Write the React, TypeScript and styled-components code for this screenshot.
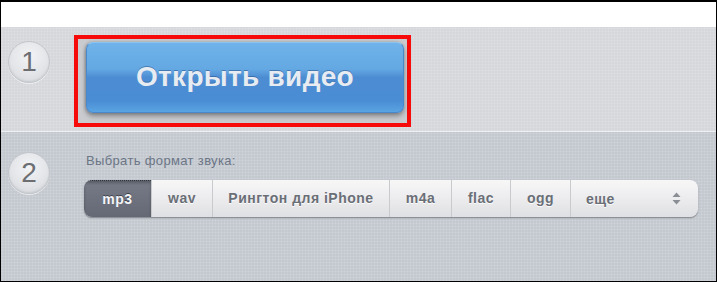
import React from 'react';
import styled, { createGlobalStyle } from 'styled-components';

const GlobalStyle = createGlobalStyle`
  html, body {
    margin: 0;
    padding: 0;
    background: #fff;
  }
  * {
    box-sizing: border-box;
  }
`;

const Frame = styled.div`
  width: 717px;
  height: 282px;
  border: 1px solid #000;
  border-top-width: 2px;
  background: #fff;
  display: flex;
  flex-direction: column;
  overflow: hidden;
  font-family: 'Liberation Sans', Arial, sans-serif;
`;

const TopStrip = styled.div`
  height: 25px;
  flex: none;
  background: #fff;
`;

const Step = styled.section<{ $tone: 'light' | 'dark' }>`
  display: flex;
  align-items: flex-start;
  padding-left: 7px;
  background-color: ${({ $tone }) => ($tone === 'light' ? '#d5d7db' : '#c4c8cf')};
  background-image: radial-gradient(rgba(255, 255, 255, 0.22) 0.8px, transparent 1.1px);
  background-size: 3px 3px;

  &.first {
    height: 104px;
    flex: none;
  }
  &.second {
    flex: 1;
    border-top: 1px solid #eef0f3;
  }
`;

const StepNumber = styled.div<{ $top: number }>`
  flex: none;
  width: 42px;
  height: 42px;
  margin-top: ${({ $top }) => $top}px;
  border-radius: 50%;
  border: 1px solid #c3c6cb;
  background: radial-gradient(circle at 50% 35%, #f2f3f5 0%, #e3e5e8 55%, #d3d6db 100%);
  box-shadow: inset 0 -1px 2px rgba(0, 0, 0, 0.08), 0 1px 0 rgba(255, 255, 255, 0.6);
  display: flex;
  align-items: center;
  justify-content: center;
  color: #6c6e72;
  font-size: 28px;
  line-height: 1;
  padding-bottom: 1px;
`;

const HighlightBox = styled.div`
  margin: 8px 0 0 24px;
  width: 337px;
  height: 92px;
  border: 4px solid #f70a0a;
  padding: 3px 3px 10px 8px;
  background: #c9cbcf;
  display: flex;
`;

const OpenButton = styled.button.attrs({ type: 'button' })`
  flex: 1;
  border: 1px solid #4a88cc;
  border-top-color: #8cc4ef;
  border-radius: 7px;
  background: linear-gradient(
    #70b3ea 0%,
    #64a8e3 38%,
    #4c8cd2 50%,
    #4a8dd5 84%,
    #5aa4e2 100%
  );
  box-shadow: 0 3px 5px rgba(0, 0, 0, 0.35), -1px 0 3px rgba(0, 0, 0, 0.2);
  color: #e7ecf2;
  font-family: 'Liberation Sans', Arial, sans-serif;
  font-weight: bold;
  font-size: 28px;
  letter-spacing: 0.3px;
  text-shadow: 0 -1px 0 rgba(30, 70, 120, 0.45);
  cursor: pointer;
  padding: 0 0 2px;
`;

const FormatArea = styled.div`
  margin: 22px 0 0 34px;
  display: flex;
  flex-direction: column;
`;

const Label = styled.div`
  margin-left: 2px;
  font-size: 13px;
  line-height: 14px;
  letter-spacing: 0.35px;
  color: #6b7686;
`;

const Segments = styled.div`
  margin-top: 12px;
  width: 614px;
  height: 37px;
  display: flex;
  border-radius: 8px;
  background: linear-gradient(#f7f7f8 0%, #ececee 50%, #dfe0e3 100%);
  box-shadow: 0 1px 0 #8e9298, 0 1px 2px rgba(0, 0, 0, 0.25);
  overflow: hidden;
`;

const Segment = styled.div<{ $w: number; $active?: boolean; $left?: boolean }>`
  flex: none;
  width: ${({ $w }) => $w}px;
  display: flex;
  align-items: center;
  justify-content: ${({ $left }) => ($left ? 'space-between' : 'center')};
  padding: ${({ $left }) => ($left ? '0 17px 0 15px' : '0 0 1px')};
  font-size: 14px;
  letter-spacing: 0.5px;
  font-weight: bold;
  color: ${({ $active }) => ($active ? '#f4f6f9' : '#6a6e76')};
  text-shadow: ${({ $active }) =>
    $active ? '0 -1px 0 rgba(0, 0, 0, 0.45)' : '0 1px 0 rgba(255, 255, 255, 0.9)'};
  background: ${({ $active }) =>
    $active ? 'linear-gradient(#767b87 0%, #6d727e 50%, #646975 100%)' : 'transparent'};
  border-top: ${({ $active }) => ($active ? '1px dotted #2f333b' : 'none')};
  box-shadow: ${({ $active }) => ($active ? 'inset 0 2px 3px rgba(0, 0, 0, 0.25)' : 'none')};

  & + & {
    border-left: 1px solid #c9cacd;
  }
`;

const SortArrows = () => (
  <svg width="9" height="13" viewBox="0 0 9 13">
    <path d="M4.5 0.5 L8.5 5 H0.5 Z" fill="#8a8d93" />
    <path d="M4.5 12.5 L8.5 8 H0.5 Z" fill="#8a8d93" />
  </svg>
);

const formats = [
  { name: 'mp3', w: 67 },
  { name: 'wav', w: 61 },
  { name: 'Рингтон для iPhone', w: 177 },
  { name: 'm4a', w: 62 },
  { name: 'flac', w: 59 },
  { name: 'ogg', w: 60 },
];

export default function App() {
  return (
    <>
      <GlobalStyle />
      <Frame>
        <TopStrip />
        <Step $tone="light" className="first">
          <StepNumber $top={14}>1</StepNumber>
          <HighlightBox>
            <OpenButton>Открыть видео</OpenButton>
          </HighlightBox>
        </Step>
        <Step $tone="dark" className="second">
          <StepNumber $top={20}>2</StepNumber>
          <FormatArea>
            <Label>Выбрать формат звука:</Label>
            <Segments>
              {formats.map((f, i) => (
                <Segment key={f.name} $w={f.w} $active={i === 0}>
                  {f.name}
                </Segment>
              ))}
              <Segment $w={128} $left>
                <span>еще</span>
                <SortArrows />
              </Segment>
            </Segments>
          </FormatArea>
        </Step>
      </Frame>
    </>
  );
}
